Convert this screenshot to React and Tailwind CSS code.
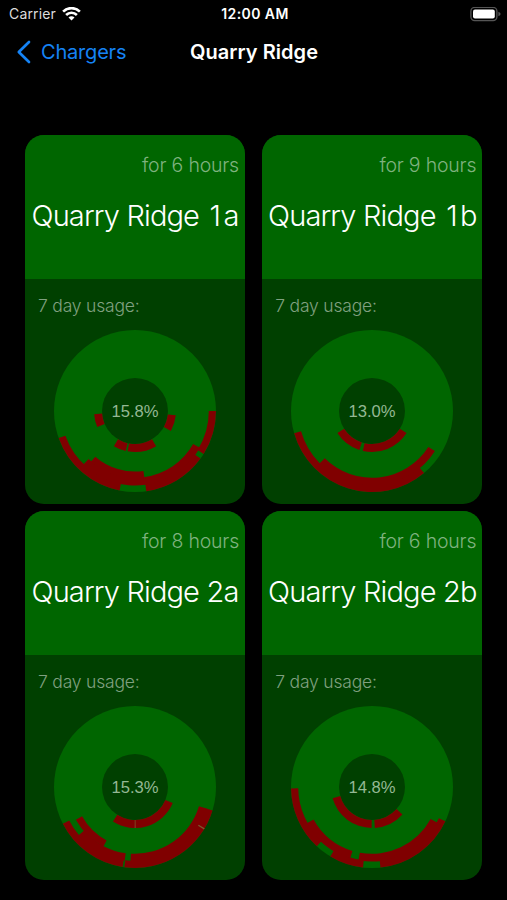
import React from 'react';

const site = "Quarry Ridge";

// Every arc is [inner radius, outer radius, start angle, end angle],
// angles run clockwise from three o'clock.
const chargers = [
  {
    bay: "1",
    plug: "a",
    status: "for 6 hours",
    usage: "15.8%",
    arcs: [
      [73.8, 81, 0, 32],
      [73.8, 81, 36, 82],
      [73.8, 81, 101, 160.5],
      [66.8, 74.6, 29.5, 134],
      [60.5, 67.6, 82, 131],
      [33, 41, 6, 29],
      [33, 41, 59, 100.5],
      [33, 41, 103, 121],
      [33, 41, 157, 175.5],
    ],
    ticks: [],
  },
  {
    bay: "1",
    plug: "b",
    status: "for 9 hours",
    usage: "13.0%",
    arcs: [
      [73.8, 81, 50, 164],
      [66.8, 74.6, 32.5, 135],
      [33, 41, 32.5, 103],
      [33, 41, 108, 147.5],
    ],
    ticks: [],
  },
  {
    bay: "2",
    plug: "a",
    status: "for 8 hours",
    usage: "15.3%",
    arcs: [
      [73.8, 81, 16.8, 97.6],
      [73.8, 81, 98.8, 153],
      [66.8, 74.6, 16.8, 93.5],
      [66.8, 74.6, 98, 139.5],
      [60.5, 67.6, 118, 151],
      [33, 41, 23, 122.5],
    ],
    ticks: [
      [74, 81, 30.6, 31.6],
      [33, 41, 89.2, 90.4],
    ],
  },
  {
    bay: "2",
    plug: "b",
    status: "for 6 hours",
    usage: "14.8%",
    arcs: [
      [73.8, 81, 25, 84],
      [73.8, 81, 96.4, 121],
      [73.8, 81, 133, 179],
      [66.8, 74.6, 28.6, 100.5],
      [66.8, 74.6, 107, 151],
      [33, 41, 42, 86],
      [33, 41, 90.5, 164],
    ],
    ticks: [],
  },
];

const point = (radius, angle) => {
  const rad = (angle * Math.PI) / 180;
  return `${(radius * Math.cos(rad)).toFixed(2)} ${(radius * Math.sin(rad)).toFixed(2)}`;
};

const arcPath = ([inner, outer, start, end]) =>
  `M${point(outer, start)}A${outer} ${outer} 0 0 1 ${point(outer, end)}` +
  `L${point(inner, end)}A${inner} ${inner} 0 0 0 ${point(inner, start)}Z`;

const StatusBar = () => (
  <div className="grid h-7 grid-cols-3 items-center pl-[9px] pr-[6px] text-white">
    <div className="flex items-center gap-[6px]">
      <span className="text-[14px] leading-none tracking-[0.15px] text-[#dcdcdc]">Carrier</span>
      <svg width="19" height="14" viewBox="0 0 19 14" fill="none" stroke="#fff" strokeWidth="2.6">
        <path d="M1.1 4.6A11.9 11.9 0 0 1 17.9 4.6" />
        <path d="M4.1 8A7.6 7.6 0 0 1 14.9 8" />
        <path d="M6.5 10.6A4 4 0 0 1 12.5 10.6L9.5 13.6Z" fill="#fff" stroke="none" />
      </svg>
    </div>
    <span className="whitespace-nowrap text-center text-[14px] font-semibold leading-none tracking-[0.4px]">
      12:00 AM
    </span>
    <svg className="justify-self-end" width="31" height="15" viewBox="0 0 31 15">
      <rect x="0.9" y="0.4" width="26" height="13.2" rx="3.8" fill="none" stroke="#555" strokeWidth="1.3" />
      <rect x="3" y="2.4" width="21.8" height="9.2" rx="2" fill="#fff" />
      <path d="M28.4 4.7Q30.6 5.5 30.6 7T28.4 9.3Z" fill="#555" />
    </svg>
  </div>
);

const NavBar = () => (
  <div className="grid h-12 grid-cols-[1fr_auto_1fr] items-center pl-4">
    <div className="flex items-center gap-[10px] text-[#1583f5]">
      <svg width="15" height="24" viewBox="0 0 15 24" fill="none" stroke="currentColor" strokeWidth="2.7" strokeLinecap="round" strokeLinejoin="round">
        <path d="M13 2L2.8 12L13 22" />
      </svg>
      <span className="text-[20px] leading-none tracking-[-0.2px]">Chargers</span>
    </div>
    <h1 className="pr-[15px] text-[20px] font-semibold leading-none tracking-[0.05px] text-white">
      {site}
    </h1>
  </div>
);

const UsageChart = ({ usage, arcs, ticks }) => (
  <svg className="mx-auto block" width="164" height="164" viewBox="-82 -82 164 164">
    <circle r="81" fill="#006600" />
    <circle r="33" fill="#004000" />
    {arcs.map((arc, index) => (
      <path key={index} d={arcPath(arc)} fill="#800000" />
    ))}
    {ticks.map((tick, index) => (
      <path key={index} d={arcPath(tick)} fill="#7a5a2c" />
    ))}
    <text
      y="6"
      textAnchor="middle"
      className="fill-[#94b894] font-['Liberation_Sans',sans-serif] text-[16.6px]"
    >
      {usage}
    </text>
  </svg>
);

const ChargerCard = ({ bay, plug, status, usage, arcs, ticks }) => (
  <div className="h-[369px] overflow-hidden rounded-[19px] bg-[#004000] font-light">
    <div className="h-[144px] bg-[#006600] pt-[18px]">
      <p className="pr-[6px] text-right text-[19.5px] leading-6 tracking-[-0.2px] text-[#7fb27f]">
        {status}
      </p>
      <h2 className="mt-[21px] whitespace-nowrap text-center text-[29px] leading-9 tracking-[-0.85px] text-white">
        {site} <span className="inline-block w-[17px] text-center">{bay}</span>{plug}
      </h2>
    </div>
    <p className="pl-[13px] pt-[17px] text-[17.5px] leading-5 tracking-[-0.2px] text-[#80a080]">
      7 day usage:
    </p>
    <div className="mt-[13px]">
      <UsageChart usage={usage} arcs={arcs} ticks={ticks} />
    </div>
  </div>
);

const App = () => {
  return (
    <div className="h-[900px] w-[507px] overflow-hidden bg-black font-['Inter',sans-serif]">
      <StatusBar />
      <NavBar />
      <div className="grid grid-cols-[220px_220px] gap-x-[17.3px] gap-y-[7px] pl-[25px] pt-[59.4px]">
        {chargers.map((charger) => (
          <ChargerCard key={charger.bay + charger.plug} {...charger} />
        ))}
      </div>
    </div>
  );
};

export default App;
